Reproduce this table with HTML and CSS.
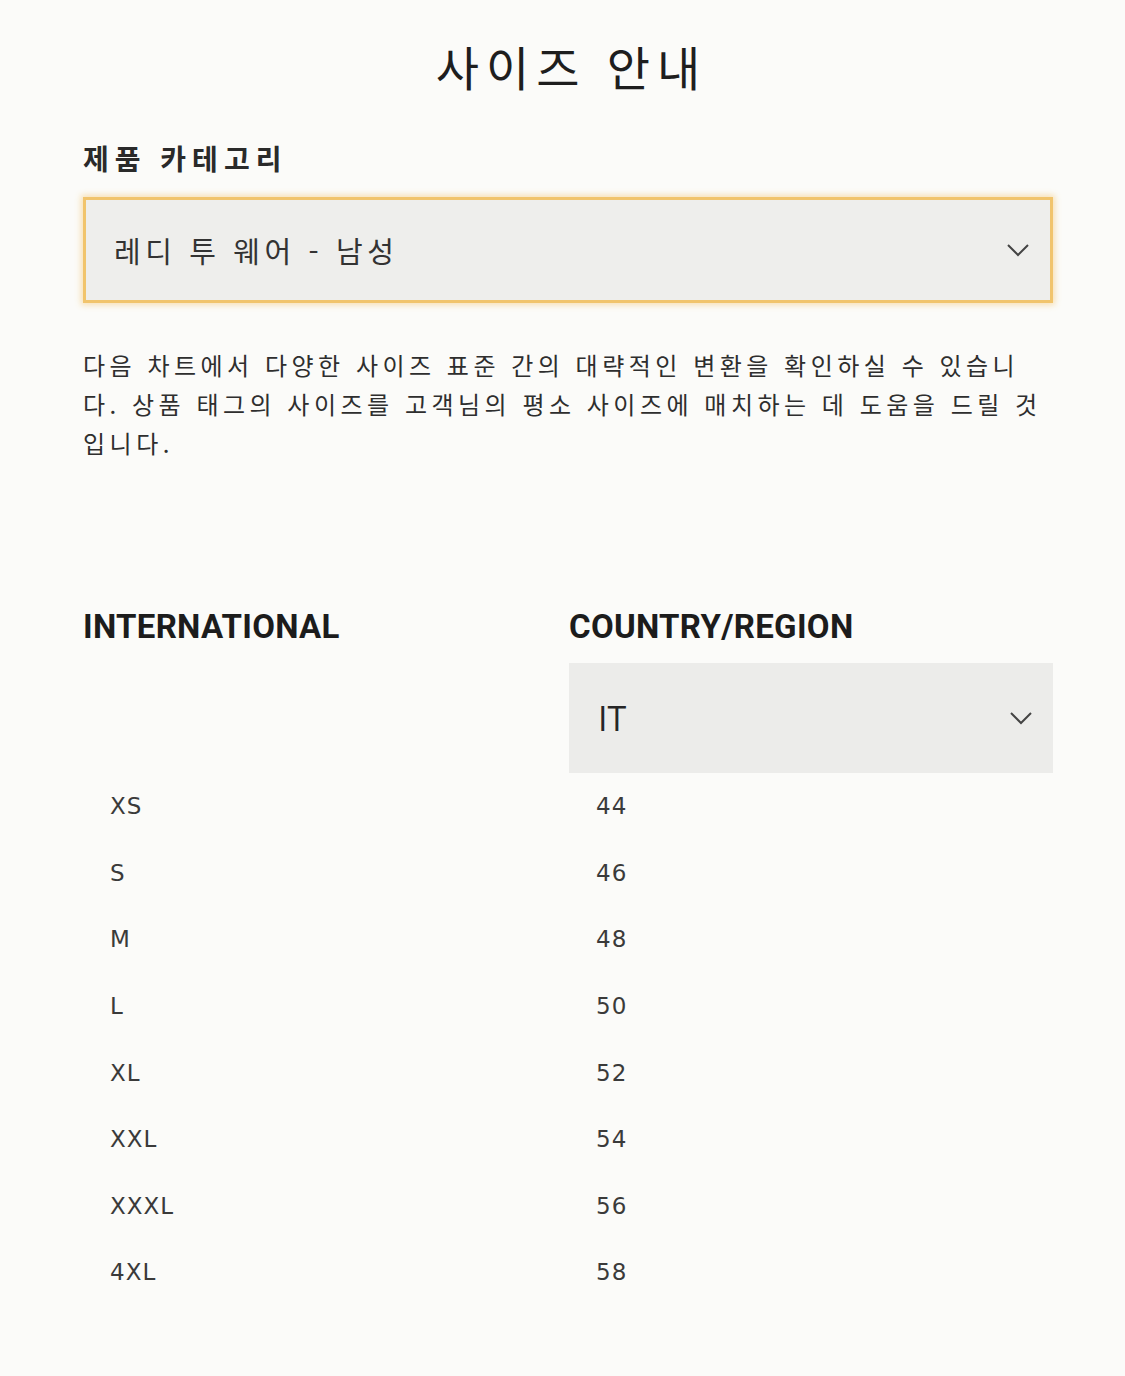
FILE: index.html
```html
<!DOCTYPE html>
<html lang="ko">
<head>
<meta charset="utf-8">
<title>사이즈 안내</title>
<link rel="stylesheet" href="styles.css">
</head>
<body>
<main class="page">
  <h1 class="title">사이즈 안내</h1>
  <h2 class="label">제품 카테고리</h2>
  <div class="select select-category">
    <span class="select-text">레디 투 웨어 - 남성</span>
    <svg class="chevron" width="24" height="14" viewBox="0 0 24 14"><polyline points="2,2 12,12 22,2" fill="none" stroke="#444" stroke-width="2"/></svg>
  </div>
  <p class="intro">다음 차트에서 다양한 사이즈 표준 간의 대략적인 변환을 확인하실 수 있습니다. 상품 태그의 사이즈를 고객님의 평소 사이즈에 매치하는 데 도움을 드릴 것입니다.</p>

  <div class="chart">
    <div class="chart-head">INTERNATIONAL</div>
    <div class="chart-head">COUNTRY/REGION</div>
    <div class="chart-spacer"></div>
    <div class="select select-region">
      <span class="region-text">IT</span>
      <svg class="chevron" width="24" height="14" viewBox="0 0 24 14"><polyline points="2,2 12,12 22,2" fill="none" stroke="#444" stroke-width="2"/></svg>
    </div>
    <div class="cell">XS</div><div class="cell">44</div>
    <div class="cell">S</div><div class="cell">46</div>
    <div class="cell">M</div><div class="cell">48</div>
    <div class="cell">L</div><div class="cell">50</div>
    <div class="cell">XL</div><div class="cell">52</div>
    <div class="cell">XXL</div><div class="cell">54</div>
    <div class="cell">XXXL</div><div class="cell">56</div>
    <div class="cell">4XL</div><div class="cell">58</div>
  </div>
</main>
</body>
</html>
```

FILE: styles.css
```css
html, body {
  margin: 0;
  padding: 0;
  background: #fbfbf9;
}
body {
  font-family: "Noto Sans CJK KR", "Noto Sans", sans-serif;
  color: #222;
}
.page {
  padding: 40px 72px 0 83px;
  width: 970px;
}
.title {
  margin: 0;
  text-align: center;
  font-size: 47px;
  line-height: 52px;
  font-weight: 400;
  letter-spacing: 7px;
  color: #1e1e1e;
  padding-left: 7px;
}
.label {
  margin: 48px 0 0;
  font-size: 28px;
  line-height: 36px;
  font-weight: 700;
  letter-spacing: 6px;
  color: #2a2a2a;
}
.select {
  display: flex;
  align-items: center;
  justify-content: space-between;
  background: #eeeeec;
  box-sizing: border-box;
}
.select-category {
  margin-top: 21px;
  height: 106px;
  border: 3px solid #f1c46c;
  box-shadow: 0 0 6px 2px rgba(245, 190, 90, 0.45);
  padding: 0 20px 0 28px;
}
.select-text {
  font-size: 29px;
  letter-spacing: 4.6px;
  color: #333;
  line-height: 1;
}
.chevron {
  display: block;
}
.intro {
  margin: 42px 4px 0 0;
  font-size: 24px;
  line-height: 39px;
  letter-spacing: 4.5px;
  color: #2e2e2e;
  word-break: break-all;
}
.chart {
  margin-top: 147px;
  display: grid;
  grid-template-columns: 486px 484px;
}
.chart-head {
  font-family: Roboto, "Liberation Sans", sans-serif;
  font-weight: 700;
  font-size: 33px;
  line-height: 36px;
  letter-spacing: 0.3px;
  color: #1c1c1c;
  margin-bottom: 18px;
}
.select-region {
  height: 110px;
  background: #ececea;
  padding: 0 20px 0 29px;
}
.region-text {
  font-family: "Open Sans", sans-serif;
  font-size: 34px;
  font-weight: 400;
  color: #262626;
}
.cell {
  height: 66.6px;
  display: flex;
  align-items: center;
  padding-left: 27px;
  font-family: "DejaVu Sans", sans-serif;
  font-size: 23px;
  letter-spacing: 1px;
  color: #3a3a3a;
}
```
